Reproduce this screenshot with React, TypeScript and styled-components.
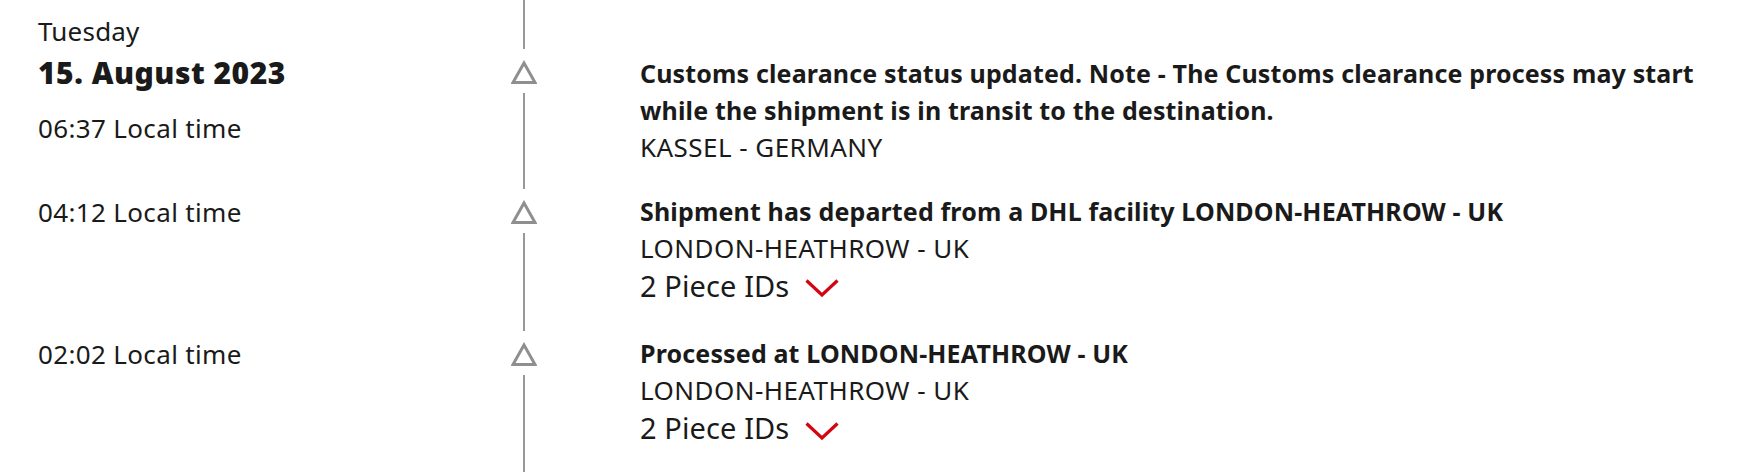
import styled, { createGlobalStyle } from "styled-components";

type TrackingEvent = {
  time: string;
  title: string;
  location: string;
  pieces?: number;
  date?: string;
};

const events: TrackingEvent[] = [
  {
    date: "15. August 2023",
    time: "06:37 Local time",
    title:
      "Customs clearance status updated. Note - The Customs clearance process may start while the shipment is in transit to the destination.",
    location: "KASSEL - GERMANY",
  },
  {
    time: "04:12 Local time",
    title: "Shipment has departed from a DHL facility LONDON-HEATHROW - UK",
    location: "LONDON-HEATHROW - UK",
    pieces: 2,
  },
  {
    time: "02:02 Local time",
    title: "Processed at LONDON-HEATHROW - UK",
    location: "LONDON-HEATHROW - UK",
    pieces: 2,
  },
];

export default function App() {
  return (
    <>
      <GlobalStyle />
      <Timeline>
        <LeftCell className="lead">
          <DayName>Tuesday</DayName>
        </LeftCell>
        <RailCell>
          <RailLine className="lead" />
        </RailCell>
        <div />

        {events.map((ev) => (
          <EventRow key={ev.time} event={ev} />
        ))}
      </Timeline>
    </>
  );
}

function EventRow({ event }: { event: TrackingEvent }) {
  const first = !!event.date;
  return (
    <>
      <LeftCell>
        {event.date && <DateHeading>{event.date}</DateHeading>}
        <TimeText $spaced={first}>{event.time}</TimeText>
      </LeftCell>
      <RailCell className="event">
        <svg width="26" height="24" viewBox="0 0 26 24">
          <polygon
            points="13,3 24,22.5 2,22.5"
            fill="none"
            stroke="#8f8f8f"
            strokeWidth="3"
          />
        </svg>
        <RailLine />
      </RailCell>
      <ContentCell $first={first}>
        <EventTitle>{event.title}</EventTitle>
        <Location>{event.location}</Location>
        {event.pieces && (
          <PieceToggle>
            {event.pieces} Piece IDs
            <svg width="34" height="18" viewBox="0 0 34 18">
              <polyline
                points="1.5,1.5 17,16 32.5,1.5"
                fill="none"
                stroke="#d40511"
                strokeWidth="3.2"
              />
            </svg>
          </PieceToggle>
        )}
      </ContentCell>
    </>
  );
}

const GlobalStyle = createGlobalStyle`
  body {
    margin: 0;
    background: #ffffff;
    font-family: "Noto Sans", "Open Sans", sans-serif;
    color: #1a1a1a;
  }
`;

const Timeline = styled.div`
  display: grid;
  grid-template-columns: 473px 26px 1fr;
  padding-left: 38px;
  width: 1744px;
  height: 472px;
  overflow: hidden;
  box-sizing: border-box;
`;

const LeftCell = styled.div`
  padding-top: 1px;

  &.lead {
    padding-top: 13px;
  }
`;

const DayName = styled.div`
  font-size: 26px;
  line-height: 36px;
  letter-spacing: 0.2px;
`;

const DateHeading = styled.div`
  font-size: 30px;
  line-height: 40px;
  font-weight: 900;
  letter-spacing: 0.5px;
  margin-top: -1px;
`;

const TimeText = styled.div<{ $spaced: boolean }>`
  font-size: 26px;
  line-height: 36px;
  letter-spacing: 0.35px;
  margin-top: ${(p) => (p.$spaced ? "17px" : "0")};
`;

const RailCell = styled.div`
  display: flex;
  flex-direction: column;
  align-items: center;

  &.event {
    padding-top: 7px;
  }

  svg {
    display: block;
    flex-shrink: 0;
  }
`;

const RailLine = styled.div`
  width: 2px;
  flex: 1;
  background: #989898;
  margin-top: 9px;
  margin-bottom: 4px;

  &.lead {
    flex: none;
    height: 49px;
    margin-top: 0;
  }
`;

const ContentCell = styled.div<{ $first: boolean }>`
  padding-left: 103px;
  padding-top: ${(p) => (p.$first ? "2px" : "0")};
  padding-bottom: ${(p) => (p.$first ? "27.5px" : "29.5px")};
  max-width: 1085px;
`;

const EventTitle = styled.div`
  font-size: 25px;
  line-height: 37px;
  font-weight: 700;
  letter-spacing: 0.15px;
`;

const Location = styled.div`
  font-size: 26px;
  line-height: 36px;
  letter-spacing: 0.45px;
`;

const PieceToggle = styled.div`
  display: flex;
  align-items: center;
  gap: 16px;
  font-size: 29px;
  line-height: 40px;
  letter-spacing: 0.1px;

  svg {
    margin-top: 5px;
  }
`;
